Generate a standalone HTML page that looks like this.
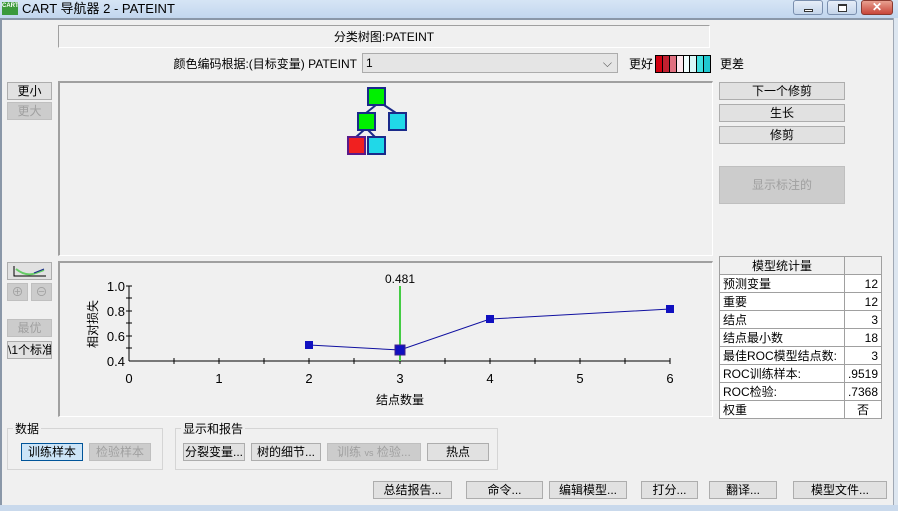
<!DOCTYPE html>
<html><head><meta charset="utf-8"><style>
*{margin:0;padding:0;box-sizing:border-box}
body{width:898px;height:511px;overflow:hidden;background:#f0f0f0;font-family:"Liberation Sans","Noto Sans CJK SC",sans-serif;font-size:12px;color:#000;position:relative}
.a{position:absolute}
.btn{position:absolute;background:#e1e1e1;border:1px solid #adadad;text-align:center;line-height:16px;font-size:12px}
.dis{color:#a0a0a0;background:#cccccc;border-color:#bfbfbf}
.sunk{position:absolute;background:#f0f0f0;border-top:2px solid #a0a0a0;border-left:2px solid #a0a0a0;border-bottom:1px solid #fff;border-right:1px solid #fff}
.node{position:absolute;width:19px;height:19px;border:2px solid #1a2a8a}
table{border-collapse:collapse}
td{border:1px solid #a0a0a0;height:18px;padding:0 3px;font-size:12px;background:#fff}
</style></head><body>
<div class="a" style="left:0;top:0;width:898px;height:18px;background:linear-gradient(#d6e5f5,#c2d6ee)"></div>
<div class="a" style="left:2px;top:2px;width:16px;height:13px;background:#3c9a3c;color:#fff;font-size:6px;font-weight:bold;line-height:8px;text-align:center">CART</div>
<div class="a" style="left:22px;top:0;font-size:13px;line-height:17px">CART 导航器 2 - PATEINT</div>
<div class="a" style="left:793px;top:0;width:30px;height:15px;border:1px solid #7a8fae;border-radius:3px;background:linear-gradient(#e6eef8,#c5d5ea)"><div style="position:absolute;left:10px;top:8px;width:9px;height:3px;border:1px solid #333;background:#fff"></div></div>
<div class="a" style="left:827px;top:0;width:30px;height:15px;border:1px solid #7a8fae;border-radius:3px;background:linear-gradient(#e6eef8,#c5d5ea)"><div style="position:absolute;left:10px;top:3px;width:9px;height:8px;border:1px solid #333;border-top-width:2px;background:#fff"></div></div>
<div class="a" style="left:861px;top:0;width:32px;height:15px;border:1px solid #8a3a30;border-radius:3px;background:linear-gradient(#e8a090,#c8463a);color:#fff;font-weight:bold;text-align:center;line-height:13px">✕</div>
<div class="a" style="left:0;top:18px;width:898px;height:2px;background:#8a97a8"></div>
<div class="a" style="left:0;top:18px;width:2px;height:493px;background:#8a97a8"></div>
<div class="a" style="left:893px;top:18px;width:5px;height:493px;background:#dde6f0"></div>
<div class="a" style="left:893px;top:18px;width:1px;height:493px;background:#a0a8b4"></div>
<div class="a" style="left:0;top:505px;width:898px;height:6px;background:#c9d9ec"></div>

<div class="a" style="left:58px;top:25px;width:652px;height:23px;border-top:1px solid #a0a0a0;border-left:1px solid #a0a0a0;border-bottom:1px solid #fff;border-right:1px solid #fff;text-align:center;line-height:22px">分类树图:PATEINT</div>
<div class="a" style="left:150px;top:55px;width:207px;text-align:right;line-height:18px">颜色编码根据:(目标变量) PATEINT</div>
<div class="a" style="left:362px;top:53px;width:256px;height:20px;background:#e5e5e5;border:1px solid #acacac;line-height:18px;padding-left:3px">1<span style="position:absolute;right:5px;top:0;color:#555">⌵</span></div>
<div class="a" style="left:629px;top:55px;line-height:18px">更好</div>
<div class="a" style="left:655px;top:55px;width:56px;height:18px;border:1px solid #000;display:flex">
<div style="flex:1;background:#d00010;border-right:1px solid #000"></div><div style="flex:1;background:#c02030;border-right:1px solid #000"></div><div style="flex:1;background:#e07080;border-right:1px solid #000"></div><div style="flex:1;background:#fde8ee;border-right:1px solid #000"></div><div style="flex:1;background:#f0ffff;border-right:1px solid #000"></div><div style="flex:1;background:#d8f8f8;border-right:1px solid #000"></div><div style="flex:1;background:#40e0e0;border-right:1px solid #000"></div><div style="flex:1;background:#20c8d0"></div></div>
<div class="a" style="left:720px;top:55px;line-height:18px">更差</div>

<div class="btn" style="left:7px;top:82px;width:45px;height:18px">更小</div>
<div class="btn dis" style="left:7px;top:102px;width:45px;height:18px">更大</div>
<div class="sunk" style="left:58px;top:81px;width:655px;height:175px"></div>
<svg class="a" style="left:0;top:0" width="898" height="511">
<g stroke="#1a2a8a" stroke-width="2"><line x1="376" y1="105" x2="366" y2="113"/><line x1="384" y1="105" x2="396" y2="113"/><line x1="364" y1="130" x2="356" y2="137"/><line x1="368" y1="130" x2="375" y2="137"/></g>
</svg>
<div class="node" style="left:367px;top:87px;background:#00f000"></div>
<div class="node" style="left:357px;top:112px;background:#00f000"></div>
<div class="node" style="left:388px;top:112px;background:#20d8e8"></div>
<div class="node" style="left:347px;top:136px;background:#f02020;border-color:#5a1a8a"></div>
<div class="node" style="left:367px;top:136px;background:#20d8e8"></div>

<div class="btn" style="left:719px;top:82px;width:126px;height:18px">下一个修剪</div>
<div class="btn" style="left:719px;top:104px;width:126px;height:18px">生长</div>
<div class="btn" style="left:719px;top:126px;width:126px;height:18px">修剪</div>
<div class="btn dis" style="left:719px;top:166px;width:126px;height:38px;line-height:36px">显示标注的</div>

<div class="btn" style="left:7px;top:262px;width:45px;height:18px"><svg width="43" height="16"><path d="M6 3V13H38" stroke="#000" fill="none"/><path d="M8 6Q18 14 28 10L36 7" stroke="#66cc66" stroke-width="2" fill="none"/><path d="M26 10L36 6" stroke="#1a2a8a" fill="none"/></svg></div>
<div class="btn dis" style="left:7px;top:283px;width:21px;height:18px">⊕</div>
<div class="btn dis" style="left:31px;top:283px;width:21px;height:18px">⊖</div>
<div class="btn dis" style="left:7px;top:319px;width:45px;height:18px">最优</div>
<div class="btn" style="left:7px;top:341px;width:45px;height:18px;overflow:hidden;text-align:left;white-space:nowrap">\1个标准</div>

<div class="sunk" style="left:58px;top:261px;width:655px;height:156px"></div>
<svg class="a" style="left:0;top:0" width="898" height="511" font-family="Liberation Sans,sans-serif" font-size="13">
<line x1="129" y1="286" x2="129" y2="361" stroke="#000"/>
<line x1="129" y1="361" x2="670" y2="361" stroke="#000"/>
<g stroke="#000"><line x1="126" y1="286" x2="132" y2="286"/><line x1="126" y1="298" x2="132" y2="298"/><line x1="126" y1="311" x2="132" y2="311"/><line x1="126" y1="323" x2="132" y2="323"/><line x1="126" y1="336" x2="132" y2="336"/><line x1="126" y1="348" x2="132" y2="348"/>
<line x1="174" y1="358" x2="174" y2="364"/><line x1="219" y1="358" x2="219" y2="364"/><line x1="264" y1="358" x2="264" y2="364"/><line x1="309" y1="358" x2="309" y2="364"/><line x1="354" y1="358" x2="354" y2="364"/><line x1="400" y1="358" x2="400" y2="364"/><line x1="445" y1="358" x2="445" y2="364"/><line x1="490" y1="358" x2="490" y2="364"/><line x1="535" y1="358" x2="535" y2="364"/><line x1="580" y1="358" x2="580" y2="364"/><line x1="625" y1="358" x2="625" y2="364"/><line x1="670" y1="358" x2="670" y2="364"/></g>
<g text-anchor="end"><text x="125" y="291">1.0</text><text x="125" y="316">0.8</text><text x="125" y="341">0.6</text><text x="125" y="366">0.4</text></g>
<g text-anchor="middle"><text x="129" y="383">0</text><text x="219" y="383">1</text><text x="309" y="383">2</text><text x="400" y="383">3</text><text x="490" y="383">4</text><text x="580" y="383">5</text><text x="670" y="383">6</text>
<text x="400" y="404" font-size="12">结点数量</text><text x="400" y="283" font-size="12">0.481</text></g>
<text transform="translate(97,324) rotate(-90)" text-anchor="middle" font-size="12">相对损失</text>
<line x1="400" y1="286" x2="400" y2="361" stroke="#44cc44" stroke-width="2"/>
<polyline points="309,345 400,350 490,319 670,309" fill="none" stroke="#1010a0"/>
<rect x="305" y="341" width="8" height="8" fill="#1010c0"/>
<rect x="395" y="345" width="10" height="10" fill="#1010c0" stroke="#40208a"/>
<rect x="486" y="315" width="8" height="8" fill="#1010c0"/>
<rect x="666" y="305" width="8" height="8" fill="#1010c0"/>
</svg>

<table class="a" style="left:719px;top:256px;width:163px">
<tr><td style="text-align:center;background:#f0f0f0">模型统计量</td><td style="width:36px;background:#f0f0f0"></td></tr>
<tr><td>预测变量</td><td style="text-align:right">12</td></tr>
<tr><td>重要</td><td style="text-align:right">12</td></tr>
<tr><td>结点</td><td style="text-align:right">3</td></tr>
<tr><td>结点最小数</td><td style="text-align:right">18</td></tr>
<tr><td style="white-space:nowrap">最佳ROC模型结点数:</td><td style="text-align:right">3</td></tr>
<tr><td>ROC训练样本:</td><td style="text-align:right">.9519</td></tr>
<tr><td>ROC检验:</td><td style="text-align:right">.7368</td></tr>
<tr><td>权重</td><td style="text-align:center">否</td></tr>
</table>

<div class="a" style="left:7px;top:428px;width:156px;height:42px;border:1px solid #d5d5d5"></div>
<div class="a" style="left:13px;top:420px;background:#f0f0f0;padding:0 2px">数据</div>
<div class="btn" style="left:21px;top:443px;width:62px;height:18px;background:#cce4f7;border-color:#005499">训练样本</div>
<div class="btn dis" style="left:89px;top:443px;width:62px;height:18px">检验样本</div>
<div class="a" style="left:175px;top:428px;width:323px;height:42px;border:1px solid #d5d5d5"></div>
<div class="a" style="left:181px;top:420px;background:#f0f0f0;padding:0 2px">显示和报告</div>
<div class="btn" style="left:183px;top:443px;width:62px;height:18px">分裂变量...</div>
<div class="btn" style="left:251px;top:443px;width:70px;height:18px">树的细节...</div>
<div class="btn dis" style="left:327px;top:443px;width:94px;height:18px">训练 <span style="font-size:9px">vs</span> 检验...</div>
<div class="btn" style="left:427px;top:443px;width:62px;height:18px">热点</div>

<div class="btn" style="left:373px;top:481px;width:79px;height:18px">总结报告...</div>
<div class="btn" style="left:466px;top:481px;width:77px;height:18px">命令...</div>
<div class="btn" style="left:549px;top:481px;width:78px;height:18px">编辑模型...</div>
<div class="btn" style="left:641px;top:481px;width:57px;height:18px">打分...</div>
<div class="btn" style="left:709px;top:481px;width:68px;height:18px">翻译...</div>
<div class="btn" style="left:793px;top:481px;width:94px;height:18px">模型文件...</div>
</body></html>
